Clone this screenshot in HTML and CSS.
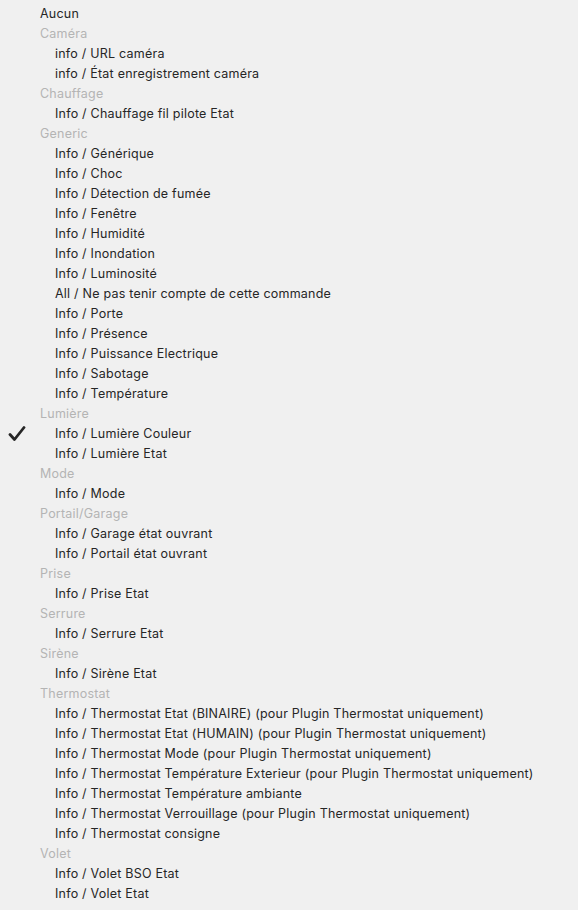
FILE: index.html
```html
<!DOCTYPE html>
<html lang="fr">
<head>
<meta charset="utf-8">
<link rel="stylesheet" href="styles.css">
</head>
<body>
<ul class="menu">
  <li class="item top">Aucun</li>
  <li class="group">Caméra</li>
  <li class="item">info / URL caméra</li>
  <li class="item">info / État enregistrement caméra</li>
  <li class="group">Chauffage</li>
  <li class="item">Info / Chauffage fil pilote Etat</li>
  <li class="group">Generic</li>
  <li class="item">Info / Générique</li>
  <li class="item">Info / Choc</li>
  <li class="item">Info / Détection de fumée</li>
  <li class="item">Info / Fenêtre</li>
  <li class="item">Info / Humidité</li>
  <li class="item">Info / Inondation</li>
  <li class="item">Info / Luminosité</li>
  <li class="item">All / Ne pas tenir compte de cette commande</li>
  <li class="item">Info / Porte</li>
  <li class="item">Info / Présence</li>
  <li class="item">Info / Puissance Electrique</li>
  <li class="item">Info / Sabotage</li>
  <li class="item">Info / Température</li>
  <li class="group">Lumière</li>
  <li class="item checked"><svg class="check" width="18" height="16" viewBox="0 0 18 16"><path d="M2 8.5 L6.5 13.5 L16 1.5" fill="none" stroke="#262626" stroke-width="2.8" stroke-linecap="round" stroke-linejoin="round"/></svg>Info / Lumière Couleur</li>
  <li class="item">Info / Lumière Etat</li>
  <li class="group">Mode</li>
  <li class="item">Info / Mode</li>
  <li class="group">Portail/Garage</li>
  <li class="item">Info / Garage état ouvrant</li>
  <li class="item">Info / Portail état ouvrant</li>
  <li class="group">Prise</li>
  <li class="item">Info / Prise Etat</li>
  <li class="group">Serrure</li>
  <li class="item">Info / Serrure Etat</li>
  <li class="group">Sirène</li>
  <li class="item">Info / Sirène Etat</li>
  <li class="group">Thermostat</li>
  <li class="item">Info / Thermostat Etat (BINAIRE) (pour Plugin Thermostat uniquement)</li>
  <li class="item">Info / Thermostat Etat (HUMAIN) (pour Plugin Thermostat uniquement)</li>
  <li class="item">Info / Thermostat Mode (pour Plugin Thermostat uniquement)</li>
  <li class="item">Info / Thermostat Température Exterieur (pour Plugin Thermostat uniquement)</li>
  <li class="item">Info / Thermostat Température ambiante</li>
  <li class="item">Info / Thermostat Verrouillage (pour Plugin Thermostat uniquement)</li>
  <li class="item">Info / Thermostat consigne</li>
  <li class="group">Volet</li>
  <li class="item">Info / Volet BSO Etat</li>
  <li class="item">Info / Volet Etat</li>
</ul>
</body>
</html>
```
FILE: styles.css
```css
html, body {
  margin: 0;
  padding: 0;
  background: #f0f0f0;
}
body {
  width: 578px;
  height: 910px;
  overflow: hidden;
  font-family: Inter, "Noto Sans", "Liberation Sans", sans-serif;
  font-size: 12.5px;
  letter-spacing: 0.22px;
}
.menu {
  list-style: none;
  margin: 0;
  padding: 4px 0 0 0;
}
.menu li {
  height: 20px;
  line-height: 20px;
  white-space: nowrap;
  position: relative;
}
.group {
  padding-left: 40px;
  color: #b4b4b4;
}
.item {
  padding-left: 55px;
  color: #262626;
}
.item.top {
  padding-left: 40px;
}
.check {
  position: absolute;
  left: 8px;
  top: 2px;
}
```
